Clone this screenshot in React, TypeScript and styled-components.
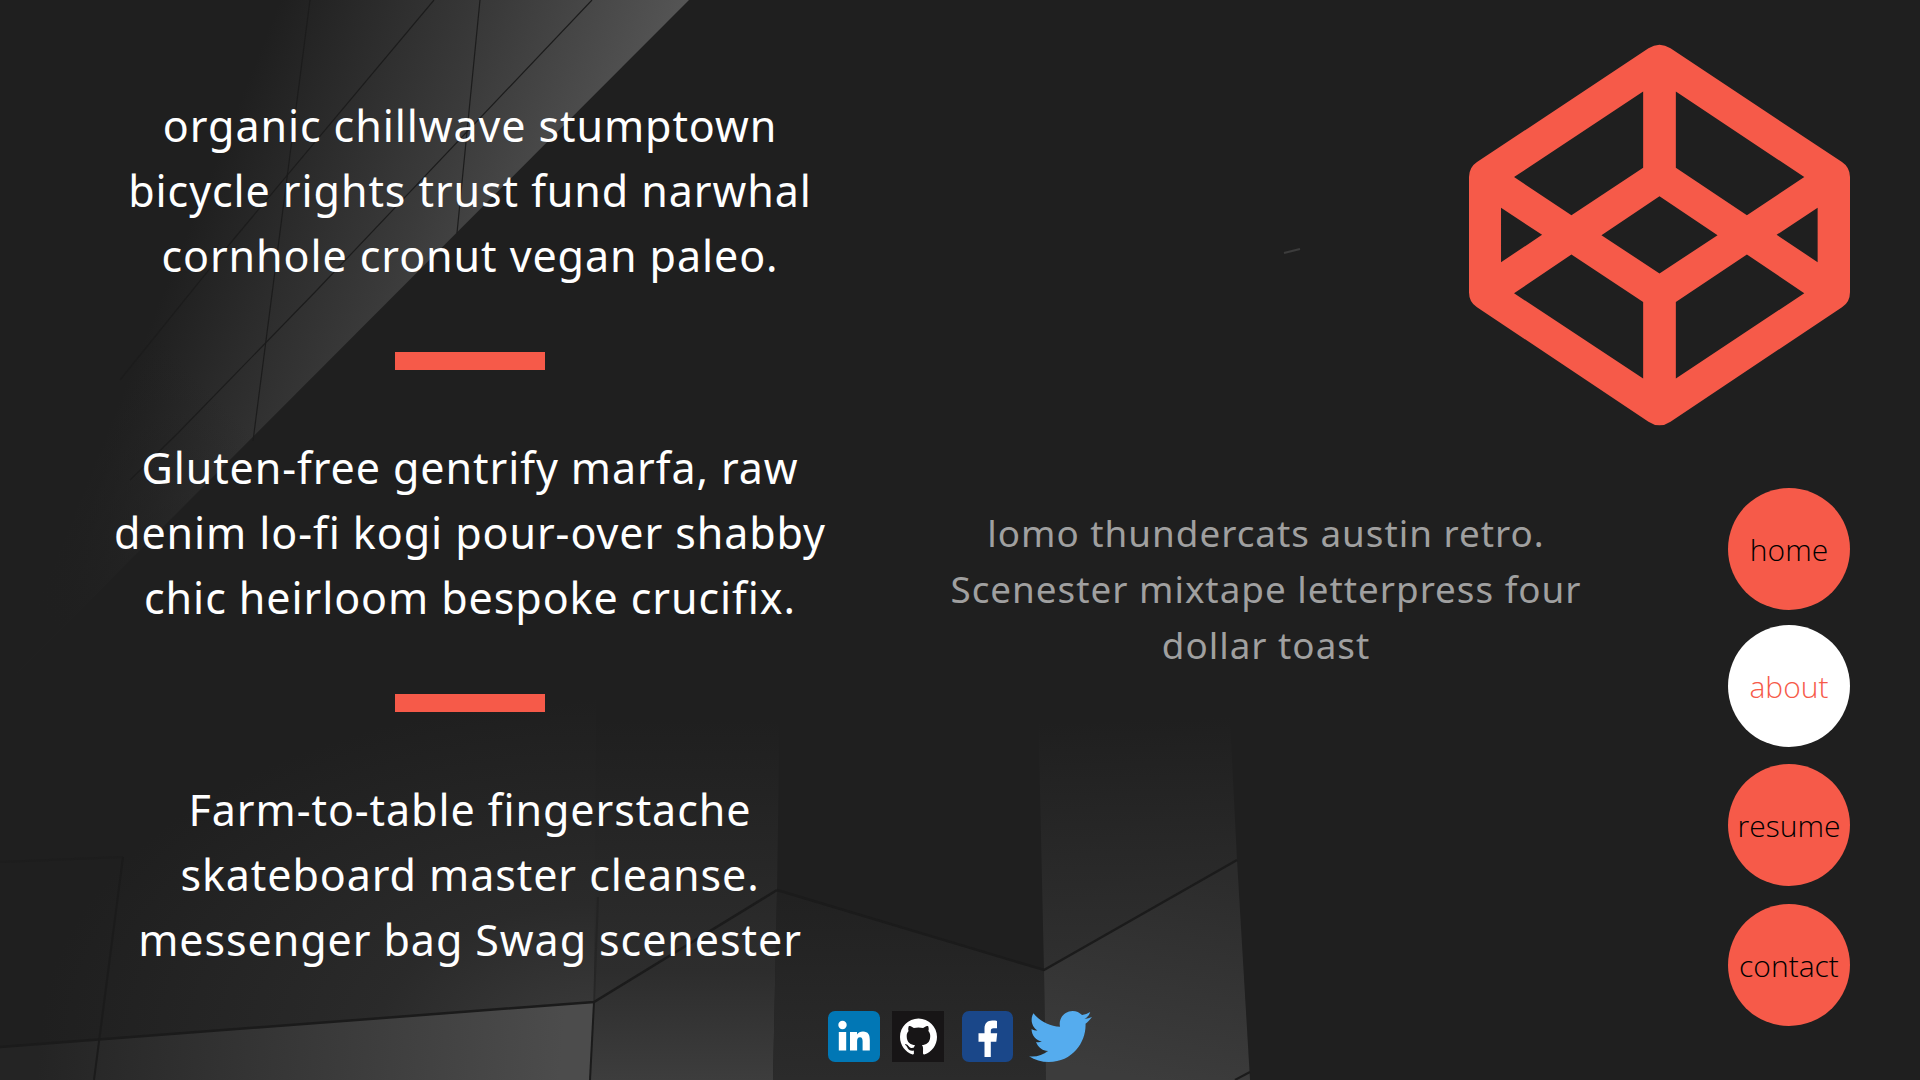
import styled, { createGlobalStyle } from 'styled-components';
import { FaTwitter } from 'react-icons/fa';
import { SiGithub } from 'react-icons/si';

const CORAL = '#f65a49';

const GlobalStyle = createGlobalStyle`
  * {
    box-sizing: border-box;
  }

  html,
  body {
    margin: 0;
    padding: 0;
    background: #1f1f1f;
  }
`;

const NAV_ITEMS = [
  { label: 'home', active: false, top: 0 },
  { label: 'about', active: true, top: 15 },
  { label: 'resume', active: false, top: 17 },
  { label: 'contact', active: false, top: 18 },
];

const App = () => {
  return (
    <Page>
      <GlobalStyle />
      <Backdrop viewBox="0 0 1920 1080" preserveAspectRatio="none">
        <defs>
          <linearGradient id="band" gradientUnits="userSpaceOnUse" x1="280" y1="0" x2="730" y2="180">
            <stop offset="0" stopColor="#1f1f1f" />
            <stop offset="0.42" stopColor="#3a3a3a" />
            <stop offset="0.8" stopColor="#565656" />
          </linearGradient>
          <linearGradient id="bandFade" gradientUnits="userSpaceOnUse" x1="250" y1="430" x2="50" y2="620">
            <stop offset="0" stopColor="#1f1f1f" stopOpacity="0" />
            <stop offset="1" stopColor="#1f1f1f" stopOpacity="1" />
          </linearGradient>
          <radialGradient
            id="floorUpper"
            gradientUnits="userSpaceOnUse"
            cx="0"
            cy="0"
            r="1"
            gradientTransform="translate(600 1040) scale(560 340)"
          >
            <stop offset="0" stopColor="#3c3c3c" />
            <stop offset="0.4" stopColor="#2a2a2a" />
            <stop offset="1" stopColor="#1f1f1f" />
          </radialGradient>
          <linearGradient id="floorLow" gradientUnits="userSpaceOnUse" x1="560" y1="1080" x2="40" y2="1040">
            <stop offset="0" stopColor="#4c4c4c" />
            <stop offset="1" stopColor="#242424" />
          </linearGradient>
          <linearGradient id="pillar" gradientUnits="userSpaceOnUse" x1="680" y1="1080" x2="680" y2="720">
            <stop offset="0" stopColor="#3d3d3d" />
            <stop offset="0.3" stopColor="#2d2d2d" />
            <stop offset="1" stopColor="#1f1f1f" />
          </linearGradient>
          <linearGradient id="pit" gradientUnits="userSpaceOnUse" x1="900" y1="1080" x2="900" y2="860">
            <stop offset="0" stopColor="#2b2b2b" />
            <stop offset="1" stopColor="#1f1f1f" />
          </linearGradient>
          <linearGradient id="wall" gradientUnits="userSpaceOnUse" x1="1140" y1="1000" x2="1130" y2="720">
            <stop offset="0" stopColor="#323232" />
            <stop offset="1" stopColor="#1f1f1f" />
          </linearGradient>
          <linearGradient id="wallLow" gradientUnits="userSpaceOnUse" x1="1150" y1="1080" x2="1190" y2="870">
            <stop offset="0" stopColor="#3c3c3c" />
            <stop offset="1" stopColor="#2c2c2c" />
          </linearGradient>
        </defs>

        <polygon points="689,0 0,690 0,0" fill="url(#band)" />
        <polygon points="689,0 0,690 0,0" fill="url(#bandFade)" />
        <g stroke="#1c1c1c" strokeWidth="1.2" fill="none">
          <path d="M310 0L253 441" />
          <path d="M434 0L233 240L120 380" />
          <path d="M480 0L457 233" />
          <path d="M592 0L317 290L178 433L130 480" />
        </g>

        <polygon points="0,700 598,700 594,1002 0,1047" fill="url(#floorUpper)" />
        <polygon points="0,1047 594,1002 590,1080 0,1080" fill="url(#floorLow)" />
        <polygon points="596,700 780,690 777,890 594,1002" fill="url(#pillar)" />
        <polygon points="594,1002 777,890 773,1080 590,1080" fill="url(#pillar)" />
        <polygon points="777,890 1044,970 1046,1080 773,1080" fill="url(#pit)" />
        <polygon points="1038,700 1228,680 1237,860 1044,970" fill="url(#wall)" />
        <polygon points="1044,970 1237,860 1250,1080 1046,1080" fill="url(#wallLow)" />

        <g stroke="#1b1b1b" strokeWidth="2" fill="none">
          <path d="M0 1047L594 1002L777 890" strokeWidth="2.5" />
          <path d="M123 857L94 1080" />
          <path d="M0 862L123 857" opacity="0.5" />
          <path d="M598 897L594 1002" opacity="0.4" />
          <path d="M594 1002L590 1080" />
          <path d="M777 890L1044 970L1237 860" strokeWidth="2.5" />
          <path d="M1235 1080L1250 1072" />
        </g>
        <path d="M1284 253L1300 249" stroke="#3c3c3c" strokeWidth="2" />
      </Backdrop>

      <Layout>
        <Statements>
          <Statement>
            organic chillwave stumptown
            <br />
            bicycle rights trust fund narwhal
            <br />
            cornhole cronut vegan paleo.
          </Statement>
          <Bar />
          <Statement>
            Gluten-free gentrify marfa, raw
            <br />
            denim lo-fi kogi pour-over shabby
            <br />
            chic heirloom bespoke crucifix.
          </Statement>
          <Bar />
          <Statement>
            Farm-to-table fingerstache
            <br />
            skateboard master cleanse.
            <br />
            messenger bag Swag scenester
          </Statement>
        </Statements>

        <RightSide>
          <Logo viewBox="87 62 1142 1163" aria-label="CodePen logo">
            <path
              fill={CORAL}
              fillRule="evenodd"
              d="M625 84Q658 62 691 84L1205 425Q1229 441 1229 470L1229 815Q1229 845 1205 860L691 1203Q658 1225 625 1203L111 860Q87 845 87 815L87 470Q87 441 111 425Z
                 M609 213L609 442L394 584L222 470Z
                 M707 213L707 442L920 584L1092 470Z
                 M658 527L832 644L658 759L484 644Z
                 M183 562L306 643L183 725Z
                 M1132 562L1009 643L1132 725Z
                 M222 818L394 702L609 844L609 1074Z
                 M1092 818L920 702L707 844L707 1074Z"
            />
          </Logo>
          <LowerRow>
            <Blurb>
              lomo thundercats austin retro.
              <br />
              Scenester mixtape letterpress four
              <br />
              dollar toast
            </Blurb>
            <Nav>
              {NAV_ITEMS.map(item => (
                <NavCircle key={item.label} $active={item.active} $top={item.top}>
                  {item.label}
                </NavCircle>
              ))}
            </Nav>
          </LowerRow>
        </RightSide>

        <Socials>
          <svg width="52" height="51" viewBox="0 0 52 51">
            <rect width="52" height="51" rx="7" fill="#0177b5" />
            <circle cx="14.5" cy="14" r="4.2" fill="#fff" />
            <rect x="10.8" y="21" width="7.4" height="18.5" fill="#fff" />
            <path
              fill="#fff"
              d="M22 21h7v2.6c1.1-1.8 3.4-3.1 6-3.1 5.4 0 6.8 3.5 6.8 8.5v10.5h-7.2v-9.2c0-2.4-.5-4.1-2.6-4.1-2.4 0-2.9 1.7-2.9 4.1v9.2H22z"
            />
          </svg>
          <GithubTile>
            <SiGithub size={37} color="#fff" />
          </GithubTile>
          <FacebookIcon width="51" height="51" viewBox="0 0 51 51">
            <rect width="51" height="51" rx="7" fill="#1a4789" />
            <path
              fill="#fff"
              d="M22.5 46V30.7h-6v-8.4h6v-5c0-5 3.2-7.7 7.7-7.7 2.2 0 4 .2 4.8.3v7.4h-3.3c-2.4 0-2.9 1.2-2.9 2.9v2.1h6.4l-.9 8.4h-5.5V46z"
            />
          </FacebookIcon>
          <TwitterIcon>
            <FaTwitter size={63} color="#55acee" />
          </TwitterIcon>
        </Socials>
      </Layout>
    </Page>
  );
};

export default App;

const Page = styled.div`
  position: relative;
  width: 1920px;
  height: 1080px;
  overflow: hidden;
  background: #1f1f1f;
`;

const Backdrop = styled.svg`
  position: absolute;
  top: 0;
  left: 0;
  width: 100%;
  height: 100%;
`;

const Layout = styled.div`
  position: relative;
  display: grid;
  grid-template-columns: 940px 1fr;
  grid-template-rows: 1080px;
`;

const Statements = styled.div`
  grid-column: 1;
  grid-row: 1;
  display: flex;
  flex-direction: column;
  align-items: center;
  padding-top: 94px;
`;

const Statement = styled.p`
  margin: 0;
  font-family: 'Noto Sans', sans-serif;
  font-size: 43px;
  letter-spacing: 0.92px;
  line-height: 64.8px;
  text-align: center;
  color: #fff;
`;

const Bar = styled.div`
  width: 150px;
  height: 18px;
  margin: 64px 0 65.6px;
  background: ${CORAL};
`;

const RightSide = styled.div`
  grid-column: 2;
  grid-row: 1;
  display: flex;
  flex-direction: column;
  padding: 44px 70px 0 0;
`;

const Logo = styled.svg`
  align-self: flex-end;
  width: 381px;
  height: 388px;
  margin-top: -3px;
`;

const LowerRow = styled.div`
  display: flex;
  justify-content: space-between;
  align-items: flex-start;
  margin-top: 59px;
`;

const Blurb = styled.p`
  width: 652px;
  margin: 17px 0 0;
  font-family: 'Noto Sans', sans-serif;
  font-size: 36.8px;
  letter-spacing: 1px;
  line-height: 56px;
  text-align: center;
  color: #a0a0a0;
`;

const Nav = styled.nav`
  display: flex;
  flex-direction: column;
`;

const NavCircle = styled.a<{ $active: boolean; $top: number }>`
  display: flex;
  justify-content: center;
  align-items: center;
  width: 122px;
  height: 122px;
  margin-top: ${props => props.$top}px;
  padding-top: 1px;
  border-radius: 50%;
  font-family: 'Open Sans', sans-serif;
  font-weight: 300;
  font-size: 30px;
  color: ${props => (props.$active ? CORAL : '#000')};
  background: ${props => (props.$active ? '#fff' : CORAL)};
`;

const Socials = styled.div`
  grid-column: 1 / -1;
  grid-row: 1;
  justify-self: center;
  align-self: end;
  display: flex;
  align-items: center;
  margin-bottom: 18px;
`;

const GithubTile = styled.div`
  display: flex;
  justify-content: center;
  align-items: center;
  width: 52px;
  height: 51px;
  margin-left: 12px;
  background: #171516;
`;

const FacebookIcon = styled.svg`
  margin-left: 18px;
`;

const TwitterIcon = styled.div`
  display: flex;
  height: 51px;
  align-items: center;
  margin-left: 16px;
`;
